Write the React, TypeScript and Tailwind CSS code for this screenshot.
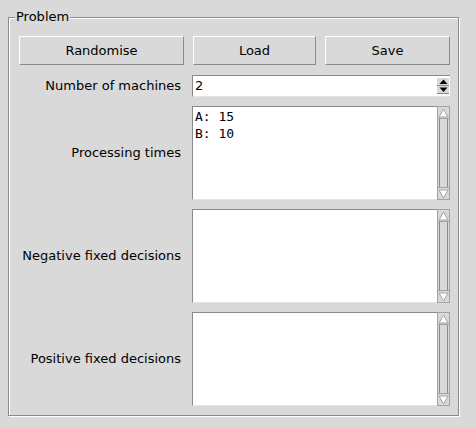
import React from "react";

function Tri({ dir, filled }: { dir: "up" | "down"; filled?: boolean }) {
  const pts = dir === "up" ? "1,9 5.5,1 10,9" : "1,1 5.5,9 10,1";
  if (filled) {
    const p = dir === "up" ? "0.5,5 4.5,0.5 8.5,5" : "0.5,0.5 4.5,5 8.5,0.5";
    return (
      <svg width="9" height="6" viewBox="0 0 9 6">
        <polygon points={p} fill="#000" />
      </svg>
    );
  }
  return (
    <svg width="11" height="10" viewBox="0 0 11 10">
      <polygon points={pts} fill="#fff" stroke="#a3a3a3" strokeWidth="1" />
    </svg>
  );
}

function ScrollBar() {
  return (
    <div className="w-[13px] flex flex-col bg-[#d9d9d9] border border-[#a3a3a3]">
      <div className="h-[12px] flex items-center justify-center border-b border-[#a3a3a3]">
        <Tri dir="up" />
      </div>
      <div className="flex-1 mx-[1px] border-x border-[#8b8b8b]" />
      <div className="h-[12px] flex items-center justify-center border-t border-[#a3a3a3]">
        <Tri dir="down" />
      </div>
    </div>
  );
}

function TextBox({ lines }: { lines?: string[] }) {
  return (
    <div className="h-[94px] flex">
      <div className="flex-1 bg-white border-t border-l border-[#8b8b8b] border-b border-b-[#e4e4e4] pt-[1px] pl-[2px] font-['DejaVu_Sans_Mono',monospace] text-[13px] leading-[17px] text-black whitespace-pre">
        {lines?.map((l) => (
          <div key={l}>{l}</div>
        ))}
      </div>
      <ScrollBar />
    </div>
  );
}

function Button({ label, w }: { label: string; w: string }) {
  return (
    <button
      className={`${w} h-[29px] bg-[#d9d9d9] border border-t-white border-l-white border-b-[#8b8b8b] border-r-[#8b8b8b] text-black`}
    >
      {label}
    </button>
  );
}

export default function App() {
  const rows = [
    { label: "Processing times", lines: ["A: 15", "B: 10"] },
    { label: "Negative fixed decisions" },
    { label: "Positive fixed decisions" },
  ];

  return (
    <div className="w-[476px] h-[428px] bg-[#d9d9d9] pt-[17px] pl-[8px] font-['DejaVu_Sans',sans-serif] text-[13px] text-black">
      <div className="relative w-[451px] h-[399px] border border-[#8b8b8b] shadow-[inset_1px_1px_0_#fff,1px_1px_0_#fff] pt-[18px] pl-[10px] pr-[8px] pb-[9px]">
        <span className="absolute left-[6px] top-[-9px] bg-[#d9d9d9] px-[1px] leading-[16px]">
          Problem
        </span>

        <div className="flex gap-[9px]">
          <Button label="Randomise" w="w-[165px]" />
          <Button label="Load" w="w-[123px]" />
          <Button label="Save" w="w-[125px]" />
        </div>

        <div className="mt-[10px] grid grid-cols-[165px_258px] gap-x-[8px] gap-y-[9px] items-center">
          <div className="text-right pr-[3px]">Number of machines</div>
          <div className="h-[22px] flex bg-white border-t border-l border-[#8b8b8b] border-b border-b-[#e4e4e4]">
            <div className="flex-1 pl-[2px] leading-[20px]">2</div>
            <div className="w-[12px] mr-[1px] flex flex-col justify-center">
              <div className="h-[8px] flex items-center justify-center bg-[#d9d9d9] border-b border-[#8b8b8b]">
                <Tri dir="up" filled />
              </div>
              <div className="h-[8px] flex items-center justify-center bg-[#d9d9d9] border-b border-[#8b8b8b]">
                <Tri dir="down" filled />
              </div>
            </div>
          </div>

          {rows.map((r) => (
            <React.Fragment key={r.label}>
              <div className="text-right pr-[3px]">{r.label}</div>
              <TextBox lines={r.lines} />
            </React.Fragment>
          ))}
        </div>
      </div>
    </div>
  );
}
